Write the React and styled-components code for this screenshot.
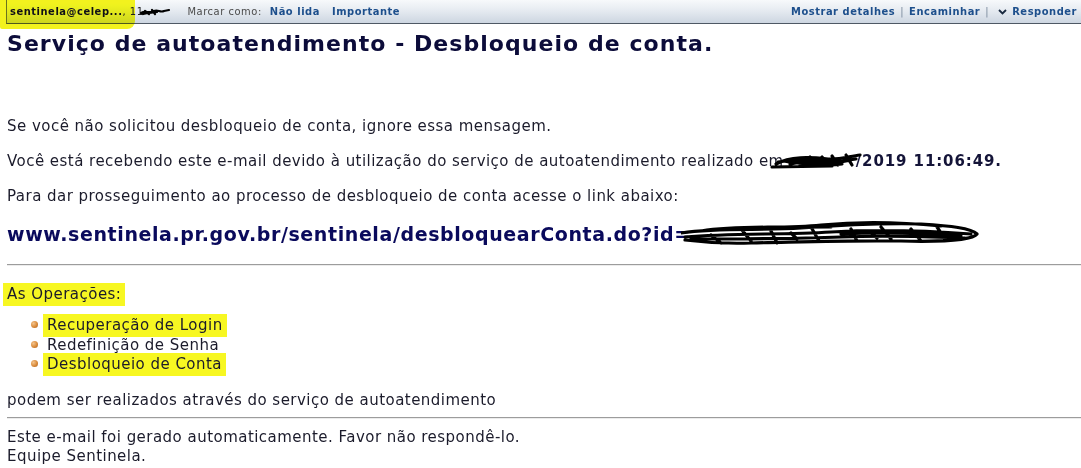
import React from "react";
import styled, { createGlobalStyle } from "styled-components";

const Global = createGlobalStyle`
  html, body { margin: 0; padding: 0; background: #fff; }
  body { font-family: "DejaVu Sans", Verdana, sans-serif; overflow: hidden; }
`;

const Page = styled.div`
  position: relative;
  width: 1081px;
  height: 468px;
  overflow: hidden;
`;

const Toolbar = styled.div`
  display: flex;
  align-items: center;
  height: 23px;
  margin-left: 6px;
  padding: 0 4px 0 3px;
  border-left: 1px solid #6b7480;
  border-bottom: 1px solid #4e5864;
  background: linear-gradient(#f7f9fb 0%, #e6ebf1 45%, #cdd6e1 100%);
  font-family: "DejaVu Sans Condensed", "DejaVu Sans", sans-serif;
  font-size: 11px;
  letter-spacing: 0.55px;
  white-space: nowrap;
`;

const Sender = styled.span`
  font-weight: bold;
  color: #101010;
`;

const Time = styled.span`
  color: #202020;
  display: inline-flex;
  align-items: center;
`;

const Label = styled.span`
  color: #4a4a4a;
  margin-left: 18px;
`;

const TLink = styled.span`
  color: #1d4f8c;
  font-weight: bold;
  margin-left: ${(p) => p.$gap || 0}px;
`;

const Sep = styled.span`
  color: #7a8a9c;
  margin: 0 ${(p) => p.$m || 4}px;
`;

const Right = styled.div`
  margin-left: auto;
  display: flex;
  align-items: center;
`;

const Marker = styled.div`
  position: absolute;
  left: 0;
  top: 0;
  width: 135px;
  height: 29px;
  background: #f2f21e;
  mix-blend-mode: darken;
  border-radius: 0 0 8px 2px;
  pointer-events: none;
`;

const Content = styled.div`
  padding: 0 0 0 7px;
  color: #1b1b2b;
  font-size: 15px;
  letter-spacing: 0.47px;
`;

const Heading = styled.h1`
  margin: 7px 0 60px;
  font-size: 22px;
  line-height: 26px;
  font-weight: bold;
  letter-spacing: 1.05px;
  color: #0c0c3a;
  white-space: nowrap;
`;

const P = styled.p`
  margin: 0 0 17px;
  line-height: 18px;
  height: 18px;
  white-space: nowrap;
  display: flex;
  align-items: center;
`;

const Bold = styled.span`
  font-weight: bold;
  color: #141438;
  letter-spacing: 0.9px;
`;

const BigLink = styled.div`
  margin: 18px 0 19px;
  height: 22px;
  font-size: 19px;
  line-height: 22px;
  font-weight: bold;
  letter-spacing: 0.6px;
  color: #0a0a5c;
  white-space: nowrap;
  display: flex;
  align-items: center;
`;

const Rule = styled.hr`
  margin: 0;
  height: 0;
  border: 0;
  border-top: 1px solid #9c9c9c;
  border-bottom: 1px solid #ececec;
`;

const Hl = styled.span`
  background: #f7f722;
  padding: 2px 4px 3px;
  margin: 0 -4px;
`;

const Ops = styled.div`
  margin: 19px 0 13px;
  line-height: 18px;
`;

const List = styled.ul`
  list-style: none;
  margin: 0 0 16px;
  padding: 0 0 0 24px;
`;

const Item = styled.li`
  line-height: 19.5px;
  height: 19.5px;
  &::before {
    content: "";
    display: inline-block;
    vertical-align: middle;
    width: 7px;
    height: 7px;
    border-radius: 50%;
    margin: -2px 9px 0 0;
    background: radial-gradient(circle at 35% 35%, #f4c48c 0%, #d98a3a 55%, #a85c1c 100%);
  }
`;

const Footer = styled.div`
  margin-top: 9px;
  line-height: 19px;
`;

const Scribble = ({ w, h, d, sw = 2.4, style }) => (
  <svg width={w} height={h} viewBox={`0 0 ${w} ${h}`} style={style}>
    <path d={d} fill="none" stroke="#000" strokeWidth={sw} strokeLinecap="round" strokeLinejoin="round" />
  </svg>
);

const Chevron = () => (
  <svg width="9" height="6" viewBox="0 0 9 6" style={{ marginRight: 5, marginLeft: 4 }}>
    <path d="M1 1 L4.5 4.5 L8 1" fill="none" stroke="#1a2a40" strokeWidth="1.8" />
  </svg>
);

export default function App() {
  return (
    <Page>
      <Global />
      <Toolbar>
        <Sender>sentinela@celep...</Sender>
        <Time>
          ,&nbsp;11
          <Scribble
            w={30}
            h={8}
            sw={2.2}
            d="M1 5 C6 2 10 6 14 3 C18 1 20 5 24 3 L29 2 M3 6 C8 4 12 5 17 4 M5 3 L9 6 M12 2 L15 6"
            style={{ marginLeft: -4 }}
          />
        </Time>
        <Label>Marcar como:</Label>
        <TLink $gap={8}>Não lida</TLink>
        <TLink $gap={12}>Importante</TLink>
        <Right>
          <TLink>Mostrar detalhes</TLink>
          <Sep $m={5}>|</Sep>
          <TLink>Encaminhar</TLink>
          <Sep $m={5}>|</Sep>
          <Chevron />
          <TLink>Responder</TLink>
        </Right>
      </Toolbar>
      <Marker />
      <Content>
        <Heading>Serviço de autoatendimento - Desbloqueio de conta.</Heading>
        <P>Se você não solicitou desbloqueio de conta, ignore essa mensagem.</P>
        <P>
          Você está recebendo este e-mail devido à utilização do serviço de autoatendimento realizado em
          <Scribble
            w={92}
            h={18}
            sw={3.2}
            d="M2 15 L62 14 M6 12 C20 4 40 5 58 7 C70 8 80 4 90 3 M8 10 C28 7 50 9 74 6 M14 9 C30 13 44 11 60 11 C70 11 78 8 86 7 M20 12 C36 8 52 8 70 9 M40 5 L48 14 M52 5 L58 13 M62 4 L68 13 M76 3 L82 13 M30 13 C44 14 58 14 72 12"
            style={{ marginLeft: -14, marginRight: -6, position: "relative" }}
          />
          <Bold>/2019 11:06:49.</Bold>
        </P>
        <P>Para dar prosseguimento ao processo de desbloqueio de conta acesse o link abaixo:</P>
        <BigLink>
          www.sentinela.pr.gov.br/sentinela/desbloquearConta.do?id=
          <Scribble
            w={300}
            h={30}
            sw={3.2}
            d="M0 14 C40 8 80 12 120 9 C160 6 200 4 240 5 C270 7 290 9 296 15 C292 21 260 23 220 22 C170 21 120 23 70 24 C40 25 20 23 4 21 M4 18 C50 14 100 16 150 13 C200 10 250 12 290 15 M10 20 C60 20 110 20 160 18 C210 16 250 18 284 19 M20 12 C60 6 100 10 140 6 C180 2 220 3 260 7 M30 11 C70 9 110 8 150 8 M160 15 C200 13 240 14 280 17 M30 16 L40 24 M60 10 L70 22 M90 12 L96 24 M130 8 L138 22 M170 10 L176 22 M200 8 L210 20 M230 10 L240 22 M256 8 L264 20 M110 14 L116 20 M190 14 L196 19"
            style={{ marginLeft: -10, marginTop: -8, marginBottom: -8 }}
          />
        </BigLink>
        <Rule />
        <Ops>
          <Hl>As Operações:</Hl>
        </Ops>
        <List>
          <Item>
            <Hl>Recuperação de Login</Hl>
          </Item>
          <Item>Redefinição de Senha</Item>
          <Item>
            <Hl>Desbloqueio de Conta</Hl>
          </Item>
        </List>
        <P style={{ marginBottom: 8 }}>podem ser realizados através do serviço de autoatendimento</P>
        <Rule />
        <Footer>
          Este e-mail foi gerado automaticamente. Favor não respondê-lo.
          <br />
          Equipe Sentinela.
        </Footer>
      </Content>
    </Page>
  );
}
